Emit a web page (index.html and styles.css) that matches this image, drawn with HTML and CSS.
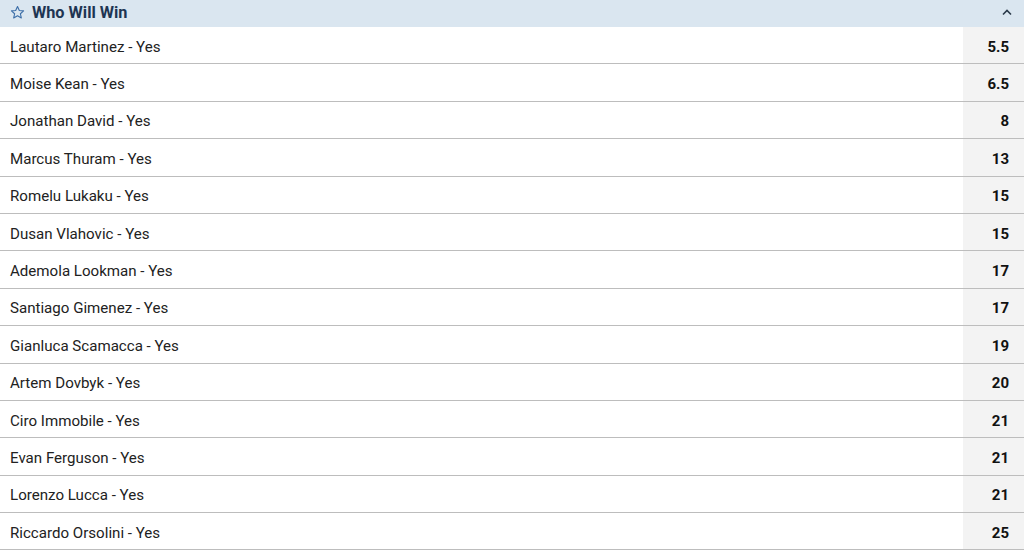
FILE: index.html
```html
<!doctype html>
<html lang="en">
  <head>
    <meta charset="UTF-8" />
    <meta name="viewport" content="width=device-width, initial-scale=1.0" />
    <title>Who Will Win</title>
    <link rel="stylesheet" href="styles.css">
  </head>
  <body>
    <div class="market">
      <div class="market-header">
        <svg class="star" width="15" height="15" viewBox="0 0 24 24">
          <path d="M12 2.5l2.9 6.2 6.8.7-5.1 4.6 1.5 6.7L12 17.3l-6.1 3.4 1.5-6.7-5.1-4.6 6.8-.7z" fill="none" stroke="#3d6fa8" stroke-width="1.8" stroke-linejoin="round" />
        </svg>
        <span class="market-title">Who Will Win</span>
        <svg class="chevron" width="10" height="7" viewBox="0 0 10 7">
          <path d="M1 5.5L5 1.5 9 5.5" fill="none" stroke="#2a3a4a" stroke-width="1.6" />
        </svg>
      </div>

      <!-- Selections -->
      <div class="row"><span class="name">Lautaro Martinez - Yes</span><span class="odds">5.5</span></div>
      <div class="row"><span class="name">Moise Kean - Yes</span><span class="odds">6.5</span></div>
      <div class="row"><span class="name">Jonathan David - Yes</span><span class="odds">8</span></div>
      <div class="row"><span class="name">Marcus Thuram - Yes</span><span class="odds">13</span></div>
      <div class="row"><span class="name">Romelu Lukaku - Yes</span><span class="odds">15</span></div>
      <div class="row"><span class="name">Dusan Vlahovic - Yes</span><span class="odds">15</span></div>
      <div class="row"><span class="name">Ademola Lookman - Yes</span><span class="odds">17</span></div>
      <div class="row"><span class="name">Santiago Gimenez - Yes</span><span class="odds">17</span></div>
      <div class="row"><span class="name">Gianluca Scamacca - Yes</span><span class="odds">19</span></div>
      <div class="row"><span class="name">Artem Dovbyk - Yes</span><span class="odds">20</span></div>
      <div class="row"><span class="name">Ciro Immobile - Yes</span><span class="odds">21</span></div>
      <div class="row"><span class="name">Evan Ferguson - Yes</span><span class="odds">21</span></div>
      <div class="row"><span class="name">Lorenzo Lucca - Yes</span><span class="odds">21</span></div>
      <div class="row"><span class="name">Riccardo Orsolini - Yes</span><span class="odds">25</span></div>
    </div>
  </body>
</html>
```

FILE: styles.css
```css
:root {
  --header-bg: #dae6f0;
  --title-color: #1e3553;
  --text-color: #222;
  --odds-bg: #f3f3f3;
  --line-color: #bdbdbd;
}

body {
  margin: 0;
  font-family: Roboto, "Liberation Sans", sans-serif;
  background: white;
  color: var(--text-color);
  overflow: hidden;
}

.market {
  width: 1024px;
}

/* Header bar */
.market-header {
  height: 27px;
  background: var(--header-bg);
  display: flex;
  align-items: center;
  padding: 0 12px 3px 10px;
  box-sizing: border-box;
}

.star {
  margin-right: 7px;
}

.market-title {
  font-size: 16.3px;
  font-weight: bold;
  color: var(--title-color);
  flex: 1;
}

.chevron {
  margin-top: 1px;
}

/* Selection rows */
.row {
  display: flex;
  height: 36.4px;
  border-bottom: 1px solid var(--line-color);
}

.name {
  flex: 1;
  display: flex;
  align-items: center;
  padding: 3px 0 0 10px;
  font-size: 15.1px;
}

.odds {
  width: 61px;
  background: var(--odds-bg);
  display: flex;
  align-items: center;
  justify-content: flex-end;
  padding: 3px 15px 0 0;
  box-sizing: border-box;
  font-size: 15px;
  font-weight: bold;
  color: #111;
}
```
